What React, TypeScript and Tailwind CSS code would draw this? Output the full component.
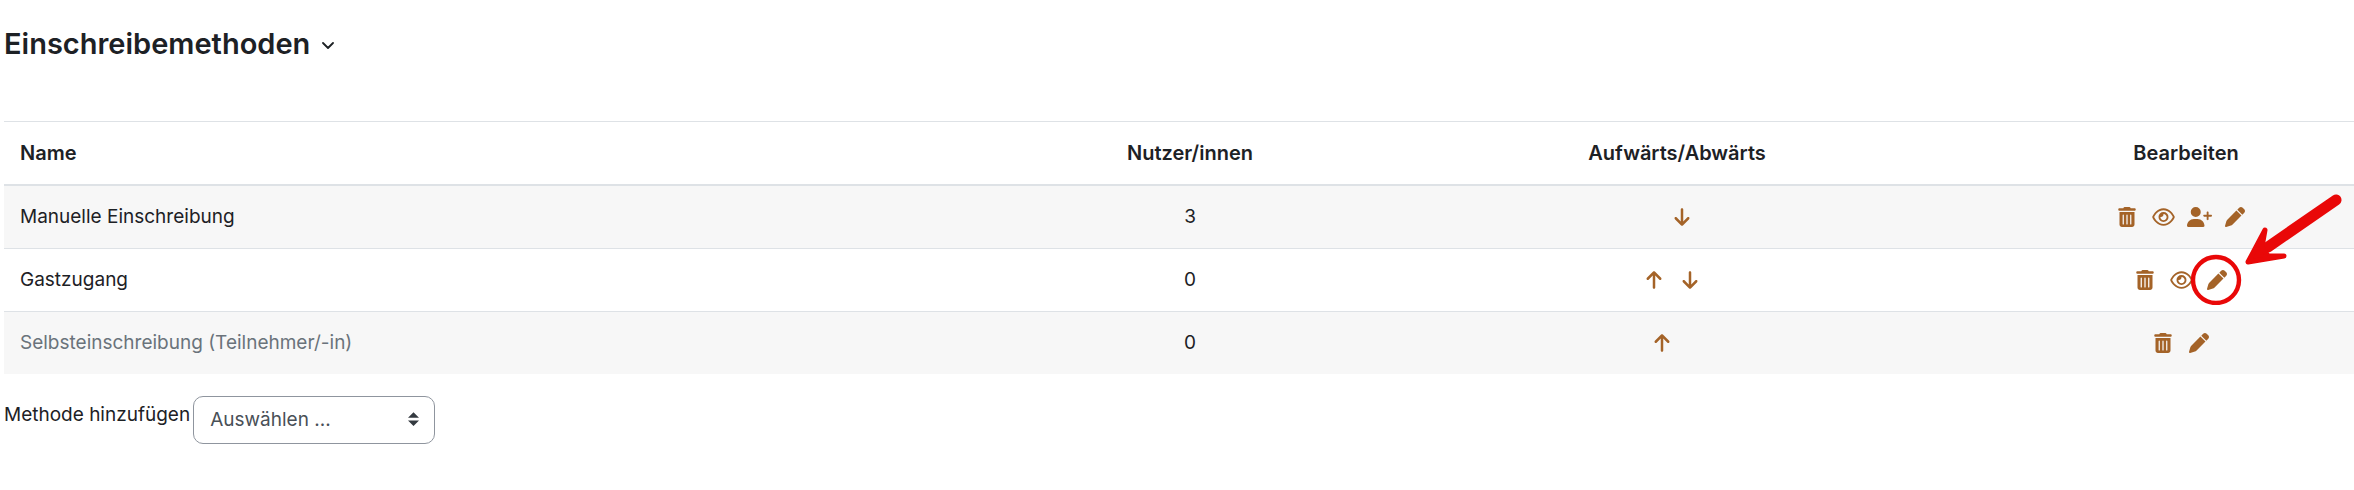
import { ReactNode } from "react";
import {
  FaArrowDown,
  FaArrowUp,
  FaPen,
  FaRegEye,
  FaTrashCan,
  FaUserPlus,
} from "react-icons/fa6";

const icons = {
  up: { label: "Aufwärts", icon: <FaArrowUp className="size-5" /> },
  down: { label: "Abwärts", icon: <FaArrowDown className="size-5" /> },
  delete: { label: "Löschen", icon: <FaTrashCan className="size-5" /> },
  hide: { label: "Deaktivieren", icon: <FaRegEye className="h-5 w-[23px]" /> },
  enrol: {
    label: "Nutzer/innen einschreiben",
    icon: <FaUserPlus className="h-5 w-[25px]" />,
  },
  edit: { label: "Bearbeiten", icon: <FaPen className="size-5" /> },
};

type Action = keyof typeof icons;

const methods: {
  name: string;
  users: number;
  move: (Action | "spacer")[];
  actions: Action[];
  disabled?: boolean;
  marked?: boolean;
}[] = [
  {
    name: "Manuelle Einschreibung",
    users: 3,
    move: ["spacer", "down"],
    actions: ["delete", "hide", "enrol", "edit"],
  },
  {
    name: "Gastzugang",
    users: 0,
    move: ["up", "down"],
    actions: ["delete", "hide", "edit"],
    marked: true,
  },
  {
    name: "Selbsteinschreibung (Teilnehmer/-in)",
    users: 0,
    move: ["up", "spacer"],
    actions: ["delete", "edit"],
    disabled: true,
  },
];

function IconLink({ action, children }: { action: Action; children?: ReactNode }) {
  return (
    <a
      href="#"
      aria-label={icons[action].label}
      className="relative mr-[10px] flex w-[26px] justify-center text-[#a46328]"
    >
      {icons[action].icon}
      {children}
    </a>
  );
}

// Red circle with an arrow pointing at it
function Marker() {
  return (
    <svg
      viewBox="0 0 160 120"
      className="pointer-events-none absolute -top-[85px] -left-[17px] h-[120px] w-[160px] max-w-none"
      fill="none"
      stroke="#e90808"
      strokeLinecap="round"
      strokeLinejoin="round"
    >
      <circle cx="29" cy="95" r="23" strokeWidth="4.4" />
      <path d="M149 15L81 62" strokeWidth="11" />
      <path
        d="M78 45L75 62L81 71L97 71L61 77Z"
        fill="#e90808"
        strokeWidth="5"
      />
    </svg>
  );
}

export default function App() {
  return (
    <div className="overflow-x-hidden bg-white pt-6 pb-10 pl-1 font-['Inter',sans-serif] text-[19px] leading-[30px] text-[#1d2125]">
      {/* Page heading */}
      <div className="flex h-10 items-center">
        <h1 className="text-[29px] font-semibold">Einschreibemethoden</h1>
        <button aria-label="Seitennavigation" className="ml-3 pt-1">
          <svg width="12" height="8" viewBox="0 0 12 8" fill="none" stroke="currentColor" strokeWidth="1.8">
            <path d="M1 1l5 5 5-5" strokeLinecap="round" strokeLinejoin="round" />
          </svg>
        </button>
      </div>

      {/* Enrolment methods */}
      <table className="mt-[57px] w-full table-fixed border-separate border-spacing-0">
        <colgroup>
          <col />
          <col className="w-[292px]" />
          <col className="w-[682px]" />
          <col className="w-[336px]" />
        </colgroup>
        <thead>
          <tr className="*:border-t *:border-b-2 *:border-[#dee2e6] *:p-4 *:text-[20px] *:font-semibold">
            <th className="text-left">Name</th>
            <th>Nutzer/innen</th>
            <th>Aufwärts/Abwärts</th>
            <th>Bearbeiten</th>
          </tr>
        </thead>
        <tbody>
          {methods.map((method) => (
            <tr
              key={method.name}
              className="odd:bg-[#f7f7f7] *:border-b *:border-[#dee2e6] *:p-4 last:*:border-b-0"
            >
              <td className={method.disabled ? "text-[#6a737b]" : ""}>{method.name}</td>
              <td className="text-center">{method.users}</td>
              <td>
                <div className="flex justify-center">
                  {method.move.map((item) =>
                    item === "spacer" ? (
                      <span key={item} className="w-5" />
                    ) : (
                      <IconLink key={item} action={item} />
                    ),
                  )}
                </div>
              </td>
              <td>
                <div className="flex h-[30px] items-center justify-center">
                  {method.actions.map((action) => (
                    <IconLink key={action} action={action}>
                      {method.marked && action === "edit" && <Marker />}
                    </IconLink>
                  ))}
                </div>
              </td>
            </tr>
          ))}
        </tbody>
      </table>

      {/* Add method */}
      <div className="mt-[22px] flex items-start">
        <label htmlFor="method" className="pt-1 pr-[3px]">
          Methode hinzufügen
        </label>
        <div className="relative">
          <select
            id="method"
            className="h-12 w-[242px] appearance-none rounded-[10px] border border-[#8f959e] bg-white px-4 text-[#495057]"
          >
            <option>Auswählen ...</option>
          </select>
          <svg
            viewBox="0 0 4 5"
            className="pointer-events-none absolute top-4 right-4 h-[14px] w-[11px]"
            fill="#343a40"
          >
            <path d="M2 0L0 2h4zm0 5L0 3h4z" />
          </svg>
        </div>
      </div>
    </div>
  );
}
